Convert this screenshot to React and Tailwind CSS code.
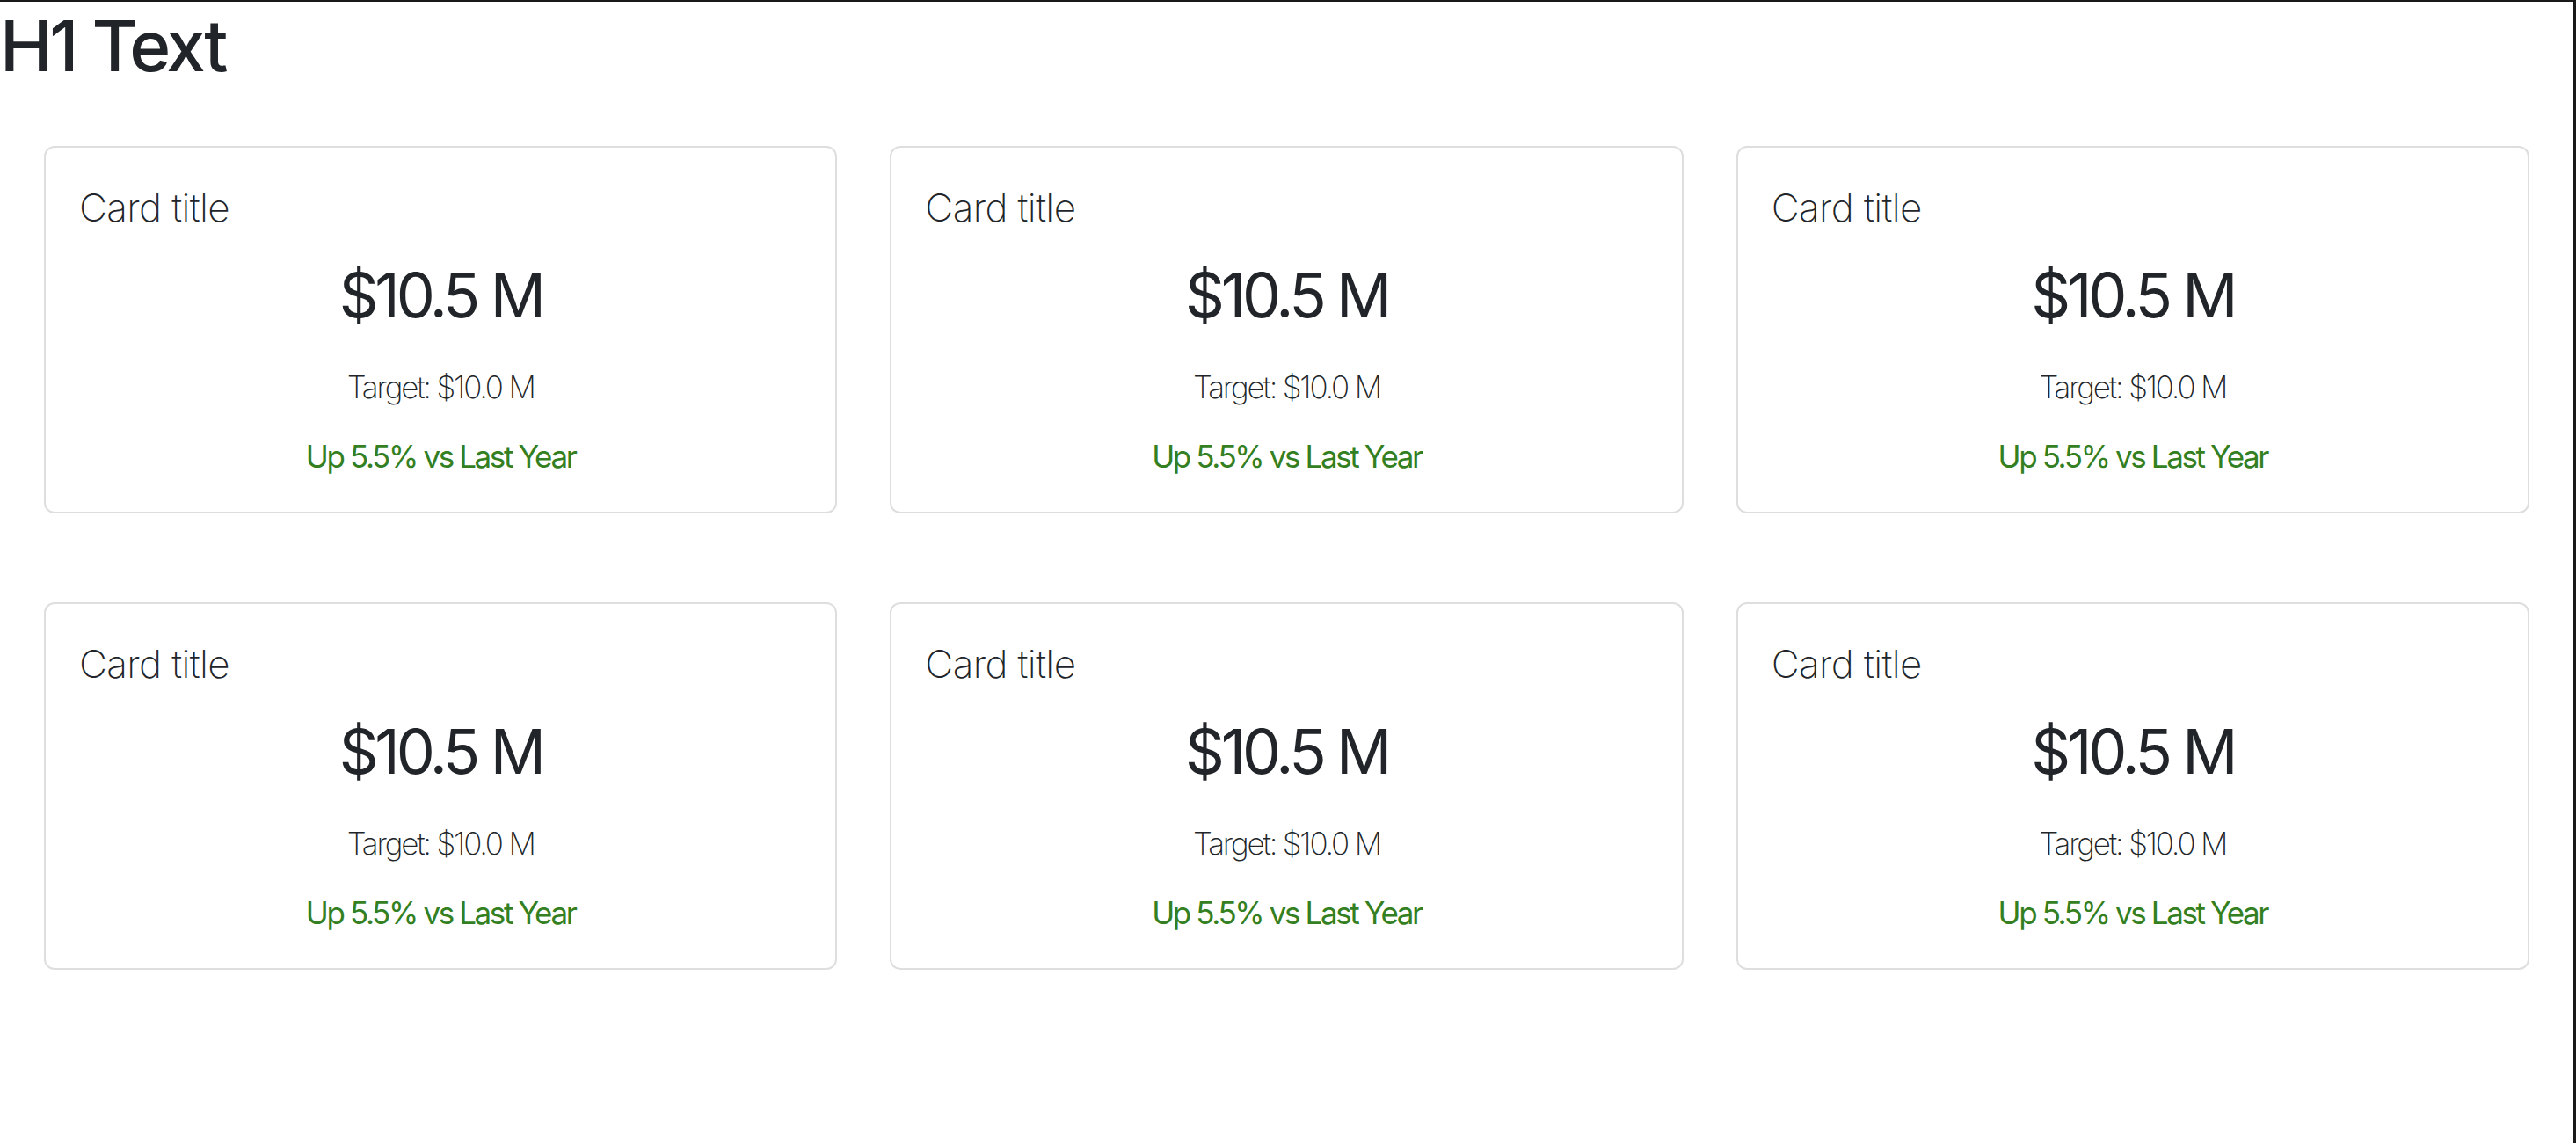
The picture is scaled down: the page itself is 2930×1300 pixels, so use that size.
import React from "react";

function Card() {
  return (
    <div className="flex flex-col rounded-[12px] border-2 border-[#dedede] bg-white pl-[38px] pr-[38px] pt-[42px] pb-[42px]">
      <div className="text-[44px] leading-[1.2] font-extralight tracking-[-0.6px] text-[#212529]">Card title</div>
      <div className="mt-[31px] text-center text-[70px] leading-[1.2] font-normal tracking-[-4.2px] text-[#212529]">$10.5 M</div>
      <div className="mt-[41px] text-center text-[35px] leading-[1.2] font-extralight tracking-[-2.2px] text-[#212529]">Target: $10.0 M</div>
      <div className="mt-[37px] text-center text-[35px] leading-[1.2] font-normal tracking-[-2.4px] text-[#337f22]">Up 5.5% vs Last Year</div>
    </div>
  );
}

export default function App() {
  return (
    <div
      className="min-h-[1300px] w-full border-t-2 border-r-[3px] border-[#1a1a1a] bg-white text-[#212529]"
      style={{ fontFamily: "Inter, 'Noto Sans', sans-serif" }}
    >
      <h1 className="m-0 pt-[2px] text-[80px] leading-[1.2] font-medium tracking-[-3.2px]">H1 Text</h1>
      <div className="mt-[66px] grid grid-cols-3 gap-x-[60px] gap-y-[101px] pl-[50px] pr-[50px]">
        <Card />
        <Card />
        <Card />
        <Card />
        <Card />
        <Card />
      </div>
    </div>
  );
}
